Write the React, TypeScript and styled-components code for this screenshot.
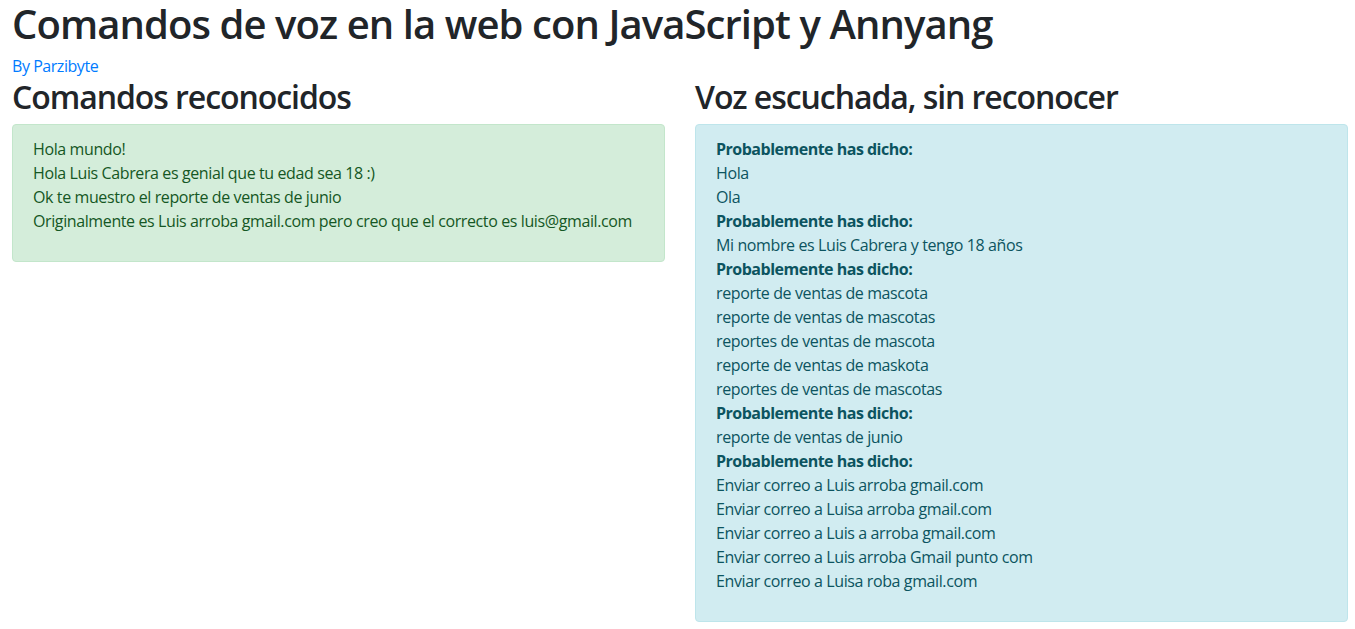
import React from 'react';
import styled, { createGlobalStyle } from 'styled-components';

const Global = createGlobalStyle`
  body {
    margin: 0;
    font-family: "Open Sans", "Noto Sans", sans-serif;
    font-size: 16px;
    line-height: 1.5;
    color: #212529;
    background: #fff;
  }
`;

const Page = styled.div`
  padding: 0 7px 0 12px;
`;

const Title = styled.h1`
  margin: 0 0 6px;
  font-size: 40px;
  font-weight: 600;
  line-height: 48px;
  letter-spacing: -0.92px;
`;

const Author = styled.a`
  display: block;
  color: #007bff;
  text-decoration: none;
  letter-spacing: -0.45px;
`;

const Columns = styled.div`
  display: grid;
  grid-template-columns: 1fr 1fr;
  column-gap: 30px;
  align-items: start;
`;

const Heading = styled.h2`
  margin: 0 0 8px;
  font-size: 32px;
  font-weight: 600;
  line-height: 38.4px;
  letter-spacing: -1.06px;
`;

const Alert = styled.div<{ $kind: 'success' | 'info' }>`
  padding: 12px 20px;
  margin-bottom: 16px;
  border: 1px solid ${(p) => (p.$kind === 'success' ? '#c3e6cb' : '#bee5eb')};
  border-radius: 4px;
  background: ${(p) => (p.$kind === 'success' ? '#d4edda' : '#d1ecf1')};
  color: ${(p) => (p.$kind === 'success' ? '#155724' : '#0c5460')};
  letter-spacing: -0.39px;
`;

const List = styled.div`
  margin-bottom: 16px;
`;

const Item = styled.div<{ $strong?: boolean }>`
  font-weight: ${(p) => (p.$strong ? 700 : 400)};
  letter-spacing: ${(p) => (p.$strong ? '-0.5px' : 'inherit')};
  white-space: nowrap;
`;

const recognized = [
  'Hola mundo!',
  'Hola Luis Cabrera es genial que tu edad sea 18 :)',
  'Ok te muestro el reporte de ventas de junio',
  'Originalmente es Luis arroba gmail.com pero creo que el correcto es luis@gmail.com',
];

const heard: string[][] = [
  ['Hola', 'Ola'],
  ['Mi nombre es Luis Cabrera y tengo 18 años'],
  [
    'reporte de ventas de mascota',
    'reporte de ventas de mascotas',
    'reportes de ventas de mascota',
    'reporte de ventas de maskota',
    'reportes de ventas de mascotas',
  ],
  ['reporte de ventas de junio'],
  [
    'Enviar correo a Luis arroba gmail.com',
    'Enviar correo a Luisa arroba gmail.com',
    'Enviar correo a Luis a arroba gmail.com',
    'Enviar correo a Luis arroba Gmail punto com',
    'Enviar correo a Luisa roba gmail.com',
  ],
];

export default function App() {
  return (
    <Page>
      <Global />
      <Title>Comandos de voz en la web con JavaScript y Annyang</Title>
      <Author href="#">By Parzibyte</Author>
      <Columns>
        <div>
          <Heading>Comandos reconocidos</Heading>
          <Alert $kind="success">
            <List>
              {recognized.map((t) => (
                <Item key={t}>{t}</Item>
              ))}
            </List>
          </Alert>
        </div>
        <div>
          <Heading>Voz escuchada, sin reconocer</Heading>
          <Alert $kind="info">
            <List>
              {heard.map((group, i) => (
                <React.Fragment key={i}>
                  <Item $strong>Probablemente has dicho:</Item>
                  {group.map((t) => (
                    <Item key={t}>{t}</Item>
                  ))}
                </React.Fragment>
              ))}
            </List>
          </Alert>
        </div>
      </Columns>
    </Page>
  );
}
